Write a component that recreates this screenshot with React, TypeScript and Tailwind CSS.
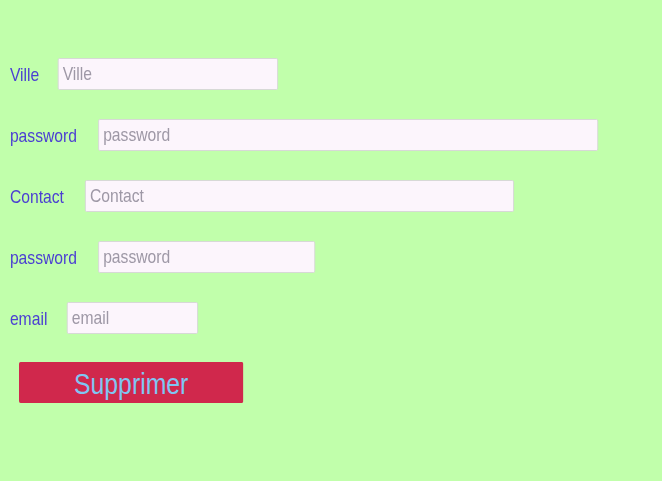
import React from "react";

const font = { fontFamily: '"Liberation Sans", Arial, sans-serif' };

function Row({ label, lw, w }: { label: string; lw: string; w: string }) {
  return (
    <div className="flex items-center h-[32px]">
      <span className={`${lw} shrink-0 text-[19px] text-[#4b3fd2] leading-none`}>{label}</span>
      <input
        placeholder={label}
        className={`${w} h-[32px] bg-[#fcf5fc] border border-[#d6d6d6] rounded-[2px] px-[5px] text-[19px] text-[#555] placeholder:text-[#9e98a6] outline-none`}
        style={font}
      />
    </div>
  );
}

export default function App() {
  return (
    <div className="w-[662px] h-[481px] bg-[#c1ffab] overflow-hidden">
      <div
        className="w-[802px] h-[481px] origin-top-left scale-x-[0.825] pt-[58px] pl-[12px]"
        style={font}
      >
        <div className="flex flex-col gap-[29px]">
          <Row label="Ville" lw="w-[58px]" w="w-[267px]" />
          <Row label="password" lw="w-[107px]" w="w-[606px]" />
          <Row label="Contact" lw="w-[91px]" w="w-[520px]" />
          <Row label="password" lw="w-[107px]" w="w-[263px]" />
          <Row label="email" lw="w-[69px]" w="w-[159px]" />
        </div>
        <button
          className="mt-[28px] ml-[11px] w-[272px] h-[41px] pt-[3px] bg-[#d0284c] rounded-[2px] text-[30px] text-[#7fc6f2] leading-none"
          style={font}
        >
          Supprimer
        </button>
      </div>
    </div>
  );
}
